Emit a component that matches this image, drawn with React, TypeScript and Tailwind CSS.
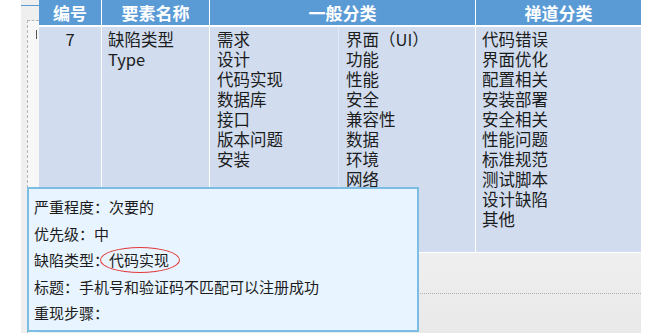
import React from 'react'

const general1 = ['需求', '设计', '代码实现', '数据库', '接口', '版本问题', '安装']
const general2 = ['界面（UI）', '功能', '性能', '安全', '兼容性', '数据', '环境', '网络']
const zentao = ['代码错误', '界面优化', '配置相关', '安装部署', '安全相关', '性能问题', '标准规范', '测试脚本', '设计缺陷', '其他']

function Col({ items, className }: { items: string[]; className?: string }) {
  return (
    <div className={className}>
      {items.map((t) => (
        <div key={t}>{t}</div>
      ))}
    </div>
  )
}

export default function App() {
  return (
    <div className="relative w-[661px] h-[333px] overflow-hidden bg-white text-[#1c1c1c] font-['Noto_Sans_CJK_SC',sans-serif]">
      <div className="flex h-full">
        <div className="w-[21px]" />
        <div className="w-[18px] flex flex-col bg-[#efefef]">
          <div className="h-[5px]" />
          <div className="h-px bg-[#5a9bd6]" />
          <div className="h-[14px]" />
          <div className="flex-1 ml-[6px] border-l border-t border-dashed border-[#b5b5b5] bg-[#f7f7f7]">
            <div className="mt-[9px] ml-[8px] w-px h-[9px] bg-[#555]" />
          </div>
        </div>

        <div className="w-[602px] flex flex-col">
          <div className="grid grid-cols-[62px_107px_265px_165px] gap-x-px gap-y-[2px] bg-white">
            <div className="h-[25px] bg-[#5a9bd6] text-white font-bold text-[17px] leading-[25px] text-center">编号</div>
            <div className="h-[25px] bg-[#5a9bd6] text-white font-bold text-[17px] leading-[25px] text-center">要素名称</div>
            <div className="h-[25px] bg-[#5a9bd6] text-white font-bold text-[17px] leading-[25px] text-center">一般分类</div>
            <div className="h-[25px] bg-[#5a9bd6] text-white font-bold text-[17px] leading-[25px] text-center">禅道分类</div>

            <div className="h-[225px] bg-[#d1ddef] pt-[2px] text-[16.5px] leading-[20px] text-center">7</div>
            <div className="h-[225px] bg-[#d1ddef] pt-[2px] pl-[6px] text-[16.5px] leading-[20px]">
              <div>缺陷类型</div>
              <div>Type</div>
            </div>
            <div className="h-[225px] bg-[#d1ddef] flex text-[16.5px] leading-[20px]">
              <Col items={general1} className="w-[128px] pt-[2px] pl-[7px]" />
              <Col items={general2} className="flex-1 pt-[2px] pl-[7px] border-l border-[#e2e9f4]" />
            </div>
            <Col items={zentao} className="h-[225px] bg-[#d1ddef] pt-[2px] pl-[6px] text-[16.5px] leading-[20px]" />
          </div>
          <div className="mt-px flex-1 bg-gradient-to-b from-[#efefef] to-[#e9e9e9]">
            <div className="h-[40px]" />
            <div className="border-t border-dotted border-[#b0b0b0]" />
          </div>
        </div>
      </div>

      <div className="absolute left-[27px] top-[187px] w-[392px] h-[145px] border-2 border-[#7bbde3] bg-[#e8f4ff] pt-[5px] pl-[5px] text-[15px]">
        <div className="h-[26.6px] flex items-center">严重程度：次要的</div>
        <div className="h-[26.6px] flex items-center">优先级：中</div>
        <div className="h-[26.6px] flex items-center">
          缺陷类型：
          <span className="relative inline-block leading-[26px]">
            代码实现
            <span className="absolute inset-y-0 -left-[9px] -right-[11px] rounded-[50%] border-[1.5px] border-[#e03a3a]" />
          </span>
        </div>
        <div className="h-[26.6px] flex items-center">标题：手机号和验证码不匹配可以注册成功</div>
        <div className="h-[26.6px] flex items-center">重现步骤：</div>
      </div>
    </div>
  )
}
